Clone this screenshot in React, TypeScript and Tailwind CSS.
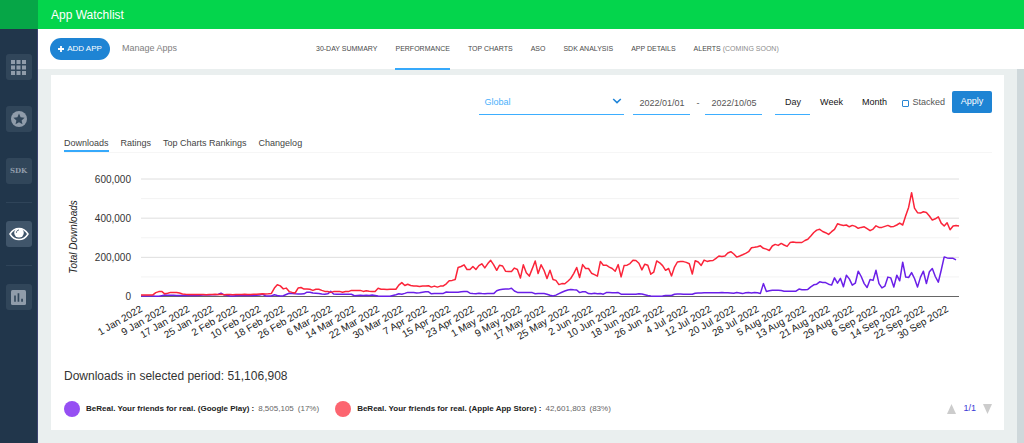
import React from 'react';

const RED = [
  8, 8, 8, 7, 8, 20, 25, 26, 14, 17, 21, 21, 21, 18, 13, 11, 10, 10, 10, 10, 10, 10, 9, 10, 10, 11, 10, 11, 9, 10,
  10, 9, 10, 10, 10, 11, 10, 10, 11, 12, 13, 14, 13, 14, 16, 43, 60, 54, 39, 43, 25, 21, 18, 43, 46, 38, 39, 37, 31, 37,
  37, 31, 26, 26, 21, 25, 26, 26, 22, 25, 25, 31, 30, 31, 31, 26, 29, 27, 26, 26, 42, 37, 37, 36, 37, 37, 37, 58, 71, 56,
  63, 56, 54, 54, 51, 54, 54, 55, 48, 53, 48, 53, 54, 65, 80, 82, 87, 148, 153, 162, 138, 138, 153, 138, 158, 167, 146, 168, 185, 162,
  134, 160, 156, 129, 128, 128, 145, 138, 94, 162, 121, 104, 141, 182, 117, 162, 133, 92, 134, 87, 82, 61, 66, 65, 78, 92, 117, 148, 97, 163,
  143, 143, 119, 112, 104, 179, 160, 160, 150, 143, 129, 163, 100, 158, 160, 168, 185, 184, 170, 136, 165, 160, 114, 124, 182, 172, 158, 134, 143, 105,
  150, 176, 178, 178, 174, 167, 115, 183, 176, 159, 186, 179, 183, 184, 195, 207, 205, 207, 222, 229, 217, 201, 207, 213, 220, 229, 249, 251, 254, 259,
  246, 242, 235, 258, 266, 261, 271, 263, 256, 275, 278, 275, 276, 276, 286, 292, 309, 327, 339, 343, 332, 326, 317, 331, 343, 371, 366, 363, 365, 356,
  363, 358, 348, 353, 356, 346, 336, 344, 361, 353, 353, 358, 363, 356, 358, 365, 375, 365, 412, 455, 530, 451, 428, 426, 433, 429, 411, 390, 397, 407,
  375, 360, 377, 341, 360, 363, 360,
];

const PURPLE = [
  2, 2, 2, 2, 2, 1, 1, 4, 7, 6, 6, 6, 5, 5, 5, 5, 5, 5, 6, 5, 6, 8, 8, 8, 9, 9, 10, 17, 8, 6,
  3, 3, 4, 5, 5, 5, 5, 5, 5, 6, 7, 11, 4, 3, 3, 9, 5, 3, 4, 10, 17, 16, 14, 13, 13, 14, 22, 22, 18, 17,
  16, 13, 12, 14, 26, 13, 12, 12, 12, 12, 11, 11, 4, 5, 6, 5, 6, 5, 7, 5, 2, 1, 1, 1, 1, 5, 9, 14, 12, 16,
  21, 21, 20, 18, 19, 22, 24, 24, 14, 16, 15, 16, 16, 23, 22, 22, 22, 22, 24, 26, 26, 17, 15, 14, 17, 15, 14, 16, 15, 15,
  29, 34, 37, 39, 38, 42, 28, 21, 21, 21, 21, 21, 20, 14, 16, 15, 15, 12, 6, 3, 7, 15, 22, 28, 33, 36, 34, 33, 20, 24,
  24, 15, 14, 17, 14, 15, 12, 20, 20, 19, 19, 20, 12, 12, 12, 12, 12, 12, 14, 13, 9, 5, 2, 1, 1, 1, 2, 5, 5, 5,
  12, 13, 13, 12, 12, 11, 11, 17, 18, 18, 19, 19, 19, 19, 19, 19, 20, 19, 19, 18, 17, 20, 18, 15, 19, 20, 18, 20, 19, 16,
  66, 26, 29, 32, 32, 32, 30, 27, 27, 27, 27, 27, 38, 34, 34, 36, 49, 60, 63, 75, 72, 71, 63, 58, 95, 68, 93, 50, 109, 90,
  58, 68, 129, 102, 66, 46, 87, 82, 134, 66, 44, 53, 99, 95, 48, 109, 80, 175, 99, 97, 122, 92, 48, 99, 129, 66, 126, 143, 102, 73,
  134, 202, 197, 195, 195, 187,
];

const DATES = [
  '1 Jan', '9 Jan', '17 Jan', '25 Jan', '2 Feb', '10 Feb', '18 Feb', '26 Feb', '6 Mar', '14 Mar', '22 Mar', '30 Mar',
  '7 Apr', '15 Apr', '23 Apr', '1 May', '9 May', '17 May', '25 May', '2 Jun', '10 Jun', '18 Jun', '26 Jun', '4 Jul',
  '12 Jul', '20 Jul', '28 Jul', '5 Aug', '13 Aug', '21 Aug', '29 Aug', '6 Sep', '14 Sep', '22 Sep', '30 Sep',
];

const LEFT = 77;
const RIGHT = 895;
const BASE = 136.5;
const STEP = (RIGHT - LEFT) / 276;

const toX = (day: number) => LEFT + day * STEP;
const toY = (thousands: number) => BASE - (thousands * 117.5) / 600;
const toPoints = (values: number[]) =>
  values.map((v, i) => `${toX(i).toFixed(1)},${toY(v).toFixed(1)}`).join(' ');

function Chart() {
  return (
    <svg viewBox="0 0 928 190" className="block w-full" role="img" aria-label="Total Downloads">
      {[100, 300, 500].map((v) => (
        <line key={v} x1={LEFT} x2={RIGHT} y1={toY(v)} y2={toY(v)} stroke="#f3f3f3" />
      ))}
      {[200, 400, 600].map((v) => (
        <line key={v} x1={LEFT} x2={RIGHT} y1={toY(v)} y2={toY(v)} stroke="#dedede" />
      ))}
      {[0, 200, 400, 600].map((v) => (
        <text key={v} x="67" y={toY(v) + 3.5} textAnchor="end" fontSize="10" fill="#333">
          {v === 0 ? '0' : `${v},000`}
        </text>
      ))}
      <text transform="translate(13 77) rotate(-90)" textAnchor="middle" fontSize="10" fontStyle="italic" fill="#222">
        Total Downloads
      </text>
      <line x1={LEFT} x2={RIGHT} y1={BASE} y2={BASE} stroke="#666" />
      <polyline points={toPoints(PURPLE)} fill="none" stroke="#6a1fe8" strokeWidth="1.5" strokeLinejoin="round" />
      <polyline points={toPoints(RED)} fill="none" stroke="#fb2439" strokeWidth="1.5" strokeLinejoin="round" />
      {DATES.map((date, i) => (
        <text
          key={date}
          transform={`translate(${(toX(i * 8) + 2).toFixed(1)} 151) rotate(-30)`}
          textAnchor="end"
          fontSize="10"
          fill="#222"
        >
          {date} 2022
        </text>
      ))}
    </svg>
  );
}

const navItems = ['30-DAY SUMMARY', 'PERFORMANCE', 'TOP CHARTS', 'ASO', 'SDK ANALYSIS', 'APP DETAILS'];
const tabs = ['Downloads', 'Ratings', 'Top Charts Rankings', 'Changelog'];

const legend = [
  { name: 'BeReal. Your friends for real. (Google Play) :', value: '8,505,105', share: '(17%)', color: 'bg-[#964ff3]' },
  { name: 'BeReal. Your friends for real. (Apple App Store) :', value: '42,601,803', share: '(83%)', color: 'bg-[#fc6570]' },
];

function SideButton({ label, active, children }: { label: string; active?: boolean; children: React.ReactNode }) {
  return (
    <button
      aria-label={label}
      className={`flex h-[26px] w-[26px] items-center justify-center rounded-[3px] ${
        active ? 'bg-[#40556a]' : 'bg-[#31465a]'
      }`}
    >
      {children}
    </button>
  );
}

function Sidebar() {
  return (
    <aside className="flex w-[38px] shrink-0 flex-col bg-[#21364b]">
      <div className="h-[29px] bg-[#06a647]" />
      <nav className="flex flex-1 flex-col items-center gap-[26px] border-r border-[#3d4470] pt-[25px]">
        <SideButton label="Apps">
          <svg viewBox="0 0 15 15" className="h-[15px] w-[15px]" fill="#909caa">
            {[0, 5.5, 11].map((y) => [0, 5.5, 11].map((x) => <rect key={`${x}-${y}`} x={x} y={y} width="4" height="4" />))}
          </svg>
        </SideButton>
        <SideButton label="Favorites">
          <svg viewBox="0 0 16 16" className="h-4 w-4">
            <circle cx="8" cy="8" r="8" fill="#909caa" />
            <path d="M8 2.6l1.6 3.7 4 .4-3 2.7.9 3.900L8 11.200l-3.500 2.100.9-3.900-3-2.700 4-.4z" fill="#31465a" />
          </svg>
        </SideButton>
        <SideButton label="SDK">
          <span className="font-['DejaVu_Serif',serif] text-[7px] font-bold text-[#909caa]">SDK</span>
        </SideButton>
        <div className="-my-2 h-px w-[26px] bg-[#2f4459]" />
        <SideButton label="Watchlist" active>
          <svg viewBox="0 0 20 14" className="h-[14px] w-5">
            <path d="M1 7C3.200 3.400 6.400 1.400 10 1.400S16.800 3.400 19 7c-2.200 3.600-5.400 5.600-9 5.600S3.200 10.600 1 7z" fill="none" stroke="#fff" strokeWidth="1.500" />
            <circle cx="10" cy="5.800" r="4.800" fill="#fff" />
            <path d="M7.400 5.400c0-1.200.9-2.200 2.200-2.400" fill="none" stroke="#40556a" strokeWidth=".9" strokeLinecap="round" />
          </svg>
        </SideButton>
        <div className="-my-2 h-px w-[26px] bg-[#2f4459]" />
        <SideButton label="Reports">
          <svg viewBox="0 0 15 15" className="h-[15px] w-[15px]">
            <rect width="15" height="15" rx="1.500" fill="#909caa" />
            <path d="M3.200 5.500h1.600v6.300H3.200zM6.600 3.200h1.700v8.600H6.600zM10.200 8.700h1.700v3.100h-1.700z" fill="#31465a" />
          </svg>
        </SideButton>
      </nav>
    </aside>
  );
}

function Filters() {
  return (
    <form className="flex h-6 items-start justify-end text-[9px] text-[#555]" onSubmit={(e) => e.preventDefault()}>
      <div className="relative mr-[9px] w-[145px]">
        <select
          aria-label="Region"
          className="block h-6 w-full appearance-none border-b border-[#3daeff] bg-transparent px-[5px] text-[#4bb1fb] outline-none"
        >
          <option>Global</option>
        </select>
        <svg viewBox="0 0 10 6" className="pointer-events-none absolute top-[7px] right-[2px] h-[6px] w-[10px]">
          <path d="M1.200 1L5 4.600 8.800 1" fill="none" stroke="#1e84d8" strokeWidth="1.500" />
        </svg>
      </div>
      <input
        aria-label="Start date"
        defaultValue="2022/01/01"
        className="h-6 w-[57px] border-b border-[#3daeff] text-center outline-none"
      />
      <span className="w-[15px] text-center leading-6">-</span>
      <input
        aria-label="End date"
        defaultValue="2022/10/05"
        className="h-6 w-[57px] border-b border-[#3daeff] text-center outline-none"
      />
      <button className="ml-[13px] h-6 w-[35px] border-b border-[#3daeff] text-[#222]">Day</button>
      <button className="h-6 w-[42px] text-[#111]">Week</button>
      <button className="h-6 w-[44px] text-[#111]">Month</button>
      <label className="mr-[7px] ml-[6px] flex h-6 items-center gap-[3px]">
        <input type="checkbox" className="h-[7px] w-[7px] appearance-none rounded-[1px] border border-[#2b87d3]" />
        Stacked
      </label>
      <button className="h-[22px] w-10 rounded-[2px] bg-[#1e84d4] text-white">Apply</button>
    </form>
  );
}

function App() {
  return (
    <div className="flex min-h-screen bg-[#eaefef] font-['Liberation_Sans',Arial,sans-serif]">
      <Sidebar />
      <div className="flex min-w-0 flex-1 flex-col">
        <header className="flex h-[29px] items-center bg-[#04d54c] px-[13px]">
          <h1 className="text-xs text-white">App Watchlist</h1>
        </header>
        <div className="flex h-10 bg-white pl-3">
          <div className="flex w-[266px] items-center gap-3">
            <button className="flex h-[22px] w-[60px] items-center justify-center gap-[3px] rounded-full bg-[#1e84d4] text-[8px] text-white">
              <svg viewBox="0 0 6 6" className="h-[6px] w-[6px]">
                <path d="M3 0v6M0 3h6" stroke="#fff" strokeWidth="1.800" />
              </svg>
              ADD APP
            </button>
            <a href="#manage" className="text-[9px] text-[#808080]">
              Manage Apps
            </a>
          </div>
          <nav className="flex gap-[18px] text-[7px] text-[#4a4a4a]">
            {navItems.map((item) => (
              <a
                key={item}
                href="#nav"
                className={`flex h-[41px] items-center whitespace-nowrap border-b-2 pt-[2px] ${
                  item === 'PERFORMANCE' ? 'border-[#36a9fb]' : 'border-transparent'
                }`}
              >
                {item}
              </a>
            ))}
            <a
              href="#alerts"
              className="flex h-[41px] items-center gap-[2px] whitespace-nowrap border-b-2 border-transparent pt-[2px]"
            >
              ALERTS <span className="text-[#8c8c8c]">(COMING SOON)</span>
            </a>
          </nav>
        </div>
        <div className="flex flex-1">
          <main className="min-w-0 flex-1 px-[13px] pt-[6px] pb-3">
            <section className="bg-white pt-4 pr-3 pb-3 pl-[13px]">
              <Filters />
              <div className="mt-[18px] flex gap-3 border-b border-[#f6f6f6] text-[9px] text-[#444]">
                {tabs.map((tab) => (
                  <button
                    key={tab}
                    className={`h-[19px] border-b-2 pt-1 ${tab === 'Downloads' ? 'border-[#36a9fb]' : 'border-transparent'}`}
                  >
                    {tab}
                  </button>
                ))}
              </div>
              <div className="mt-[7px]">
                <Chart />
              </div>
              <p className="mt-[18px] text-xs leading-4 text-[#333]">Downloads in selected period: 51,106,908</p>
              <div className="mt-4 flex h-[18px] items-center justify-between">
                <div className="flex gap-4">
                  {legend.map((item) => (
                    <div key={item.value} className="flex items-center gap-[6px] text-[8px] text-[#666]">
                      <span className={`h-4 w-4 rounded-full ${item.color}`} />
                      <span className="flex gap-1 whitespace-nowrap">
                        <b className="text-[#222]">{item.name}</b>
                        <span>{item.value}</span>
                        <span>{item.share}</span>
                      </span>
                    </div>
                  ))}
                </div>
                <div className="flex items-center gap-[7px] text-[9px] text-[#3a3ad6]">
                  <button aria-label="Previous page">
                    <svg viewBox="0 0 9 10" className="h-[10px] w-[9px]" fill="#ccc">
                      <path d="M4.500 0L9 10H0z" />
                    </svg>
                  </button>
                  1/1
                  <button aria-label="Next page">
                    <svg viewBox="0 0 9 10" className="h-[10px] w-[9px]" fill="#ccc">
                      <path d="M4.500 10L0 0h9z" />
                    </svg>
                  </button>
                </div>
              </div>
            </section>
          </main>
          <div className="w-[7px] bg-[#cfd8db]" />
        </div>
      </div>
    </div>
  );
}

export default App;
